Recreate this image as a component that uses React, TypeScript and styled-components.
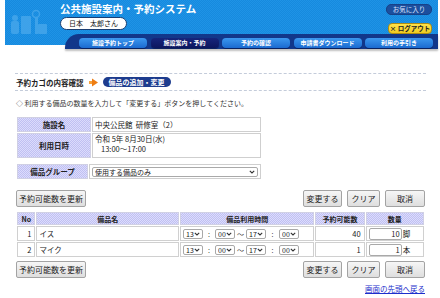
import React from "react";
import styled, { createGlobalStyle, css } from "styled-components";

const GlobalStyle = createGlobalStyle`
  html, body {
    margin: 0;
    padding: 0;
    background: #fff;
  }
  body {
    width: 440px;
    font-family: "Noto Sans CJK JP", "Noto Sans", sans-serif;
    font-size: 7.5px;
    color: #222;
  }
`

const lavender = css`
  background: repeating-conic-gradient(#c0c0f2 0 25%, #dcdcfc 0 50%) 0 0 / 2px 2px;
`

// Header

const Header = styled.header`
  margin: 0 2px 0 5px;
  background:
    linear-gradient(transparent 45px, #fff 45px),
    repeating-conic-gradient(#1f93e6 0 25%, #168ade 0 50%) 0 0 / 2px 2px;
`

const HeaderBlue = styled.div`
  display: flex;
  align-items: flex-start;
  height: 34px;
`

const Emblem = styled.div`
  width: 55px;
  height: 34px;
  display: flex;
  align-items: flex-end;
`

const TitleBlock = styled.div`
  display: flex;
  flex-direction: column;
  align-items: flex-start;
  gap: 2px;
  padding-top: 3px;
`

const Title = styled.h1`
  margin: 0;
  font-size: 10.5px;
  line-height: 12px;
  font-weight: bold;
  color: #fff;
`

const NamePill = styled.div`
  height: 11px;
  line-height: 11px;
  padding: 0 8px;
  background: #fff;
  border: 1px solid #1b3f73;
  border-radius: 7px;
  font-size: 7px;
  color: #111;
`

const HeaderLinks = styled.div`
  margin-left: auto;
  display: flex;
  flex-direction: column;
  align-items: flex-end;
  gap: 8px;
  padding: 4px 6px 0 0;
`

const FavButton = styled.a`
  width: 44px;
  height: 9px;
  line-height: 9px;
  text-align: center;
  background: #1c4f9e;
  border: 1px solid #174188;
  border-radius: 5px;
  color: #dbe6ff;
  font-size: 6.5px;
`

const LogoutButton = styled.a`
  width: 42px;
  height: 9px;
  line-height: 9px;
  text-align: center;
  background: linear-gradient(#ffe24a, #f0cc20);
  border: 1px solid #b08c10;
  border-radius: 4px;
  color: #222;
  font-size: 6.5px;
  font-weight: bold;
`

const TabBand = styled.nav`
  display: flex;
  gap: 3.5px;
  height: 15px;
  box-sizing: border-box;
  margin-left: 60px;
  padding: 4px 5px 0 14px;
  background: #12378a;
  border-radius: 14px 0 0 0;
  box-shadow: 0 2px 2px rgba(0, 0, 0, 0.25);
`

const Tab = styled.a<{ active?: boolean }>`
  width: 68px;
  height: 10px;
  line-height: 10px;
  text-align: center;
  border-radius: 4px;
  color: #fff;
  font-size: 6px;
  font-weight: bold;
  background: ${({ active }) =>
    active ? "linear-gradient(#16257c, #0b165e)" : "linear-gradient(#3b98ef, #1b6ad0)"};
  box-shadow: 0 1px 0 #0a2260;
`

// Content

const Content = styled.main`
  padding: 24px 14px 0 15px;
`

const Breadcrumb = styled.div`
  display: flex;
  align-items: center;
  gap: 5px;
  height: 16px;
  padding-left: 1px;
  border-top: 1px dashed #c4ccda;
  border-bottom: 1px dashed #c4ccda;
`

const CrumbText = styled.span`
  font-weight: bold;
  font-size: 7.5px;
`

const CrumbPill = styled.span`
  height: 10px;
  line-height: 10px;
  padding: 0 6px;
  border-radius: 6px;
  background: #1d3c8e;
  color: #fff;
  font-weight: bold;
  font-size: 7px;
`

const Lead = styled.p`
  margin: 7px 0 0 1px;
  line-height: 10px;
  font-size: 7px;
  color: #333;
`

const InfoTable = styled.table<{ gap?: number }>`
  margin: ${({ gap }) => gap ?? 8}px 0 0 1px;
  width: 246px;
  border-collapse: separate;
  border-spacing: 1px;
  line-height: 10px;
`

const LabelCell = styled.th`
  ${lavender};
  width: 72px;
  padding: 0;
  font-weight: bold;
  text-align: center;
  border: 1px solid #d0d0e4;
`

const ValueCell = styled.td<{ tall?: boolean }>`
  height: ${({ tall }) => (tall ? 23 : 13)}px;
  padding: 0 2px;
  border: 1px solid #cfcfcf;
  vertical-align: ${({ tall }) => (tall ? "top" : "middle")};
`

const Indent = styled.div`
  padding-left: 6px;
`

const SelectBox = styled.span<{ w: number }>`
  display: inline-flex;
  align-items: center;
  box-sizing: border-box;
  width: ${({ w }) => w}px;
  height: 10px;
  border: 1px solid #a9a9a9;
  border-radius: 2px;
  background: #fff;
  vertical-align: middle;

  select {
    flex: 1;
    min-width: 0;
    appearance: none;
    border: none;
    background: transparent;
    padding: 0 0 0 2px;
    margin: 0;
    font: inherit;
    font-size: 7px;
    line-height: 8px;
    color: #222;
    outline: none;
  }
  svg {
    flex: none;
    margin-right: 2px;
  }
`

const ButtonBar = styled.div<{ gap: number }>`
  display: flex;
  align-items: center;
  margin: ${({ gap }) => gap}px 0 0 1px;
`

const ButtonGroup = styled.div`
  margin-left: auto;
  display: flex;
  gap: 5px;
  padding-right: 1px;
`

const Button = styled.button<{ w: number }>`
  width: ${({ w }) => w}px;
  height: 17px;
  padding: 0;
  font-family: inherit;
  font-size: 8px;
  color: #222;
  background: linear-gradient(#f6f6f6, #dedede);
  border: 1px solid #a3a3a3;
  border-radius: 2px;
`

const MainTable = styled.table`
  margin: 4px 0 0 1px;
  width: 409px;
  border-collapse: separate;
  border-spacing: 1px;
  line-height: 10px;
`

const HeadCell = styled.th<{ w: number }>`
  ${lavender};
  width: ${({ w }) => w}px;
  height: 11px;
  padding: 0;
  font-size: 7px;
  font-weight: bold;
  text-align: center;
  border: 1px solid #d0d0e4;
`

const Cell = styled.td<{ align?: string }>`
  height: 13px;
  padding: 0 3px 0 2px;
  border: 1px solid #d0d0d0;
  text-align: ${({ align }) => align ?? "left"};
  white-space: nowrap;
`

const TimeRow = styled.div`
  display: flex;
  align-items: center;
`

const Sep = styled.span<{ w: number }>`
  width: ${({ w }) => w}px;
  text-align: center;
  font-size: 7px;
  color: #333;
`

const QtyWrap = styled.div`
  display: flex;
  align-items: center;
`

const QtyInput = styled.input`
  box-sizing: border-box;
  width: 33px;
  height: 12px;
  padding: 0 1px 0 0;
  border: 1px solid #a9a9a9;
  border-radius: 2px;
  font: inherit;
  font-size: 7.5px;
  text-align: right;
  color: #222;
`

const Unit = styled.span`
  margin-left: 1px;
`

const TopLink = styled.a`
  display: block;
  margin: 6px 1px 0 auto;
  width: max-content;
  line-height: 10px;
  color: #1d2fcc;
  text-decoration: underline;
  font-size: 7.5px;
`

// Icons

function Chevron() {
  return (
    <svg width="6" height="4" viewBox="0 0 6 4">
      <polyline points="0.8,0.8 3,3 5.2,0.8" fill="none" stroke="#333" strokeWidth="1.1" />
    </svg>
  )
}

function CrumbArrow() {
  return (
    <svg width="9" height="9" viewBox="0 0 9 9">
      <rect x="0" y="3" width="3" height="3" fill="#f7a23a" />
      <polygon points="3,0.5 9,4.5 3,8.5" fill="#ee7d12" />
    </svg>
  )
}

function EmblemArt() {
  return (
    <svg width="44" height="34" viewBox="0 0 44 34">
      <g fill="#4aa9ec" opacity="0.75">
        <circle cx="10" cy="18" r="3" />
        <rect x="6" y="21" width="8" height="13" rx="2" />
        <rect x="16" y="16" width="10" height="18" rx="1" />
        <circle cx="31" cy="14" r="3.5" fill="none" stroke="#4aa9ec" strokeWidth="1.5" />
        <rect x="30" y="17" width="3" height="17" />
        <rect x="33" y="24" width="9" height="10" rx="1" />
      </g>
    </svg>
  )
}

// Data

interface Equipment {
  no: number
  name: string
  available: number
  qty: number
  unit: string
}

const equipment: Equipment[] = [
  { no: 1, name: "イス", available: 40, qty: 10, unit: "脚" },
  { no: 2, name: "マイク", available: 1, qty: 1, unit: "本" },
]

const tabs = ["施設予約トップ", "施設案内・予約", "予約の確認", "申請書ダウンロード", "利用の手引き"]

function Select({ value, w }: { value: string; w: number }) {
  return (
    <SelectBox w={w}>
      <select defaultValue={value}>
        <option>{value}</option>
      </select>
      <Chevron />
    </SelectBox>
  )
}

function Actions({ gap }: { gap: number }) {
  return (
    <ButtonBar gap={gap}>
      <Button w={70}>予約可能数を更新</Button>
      <ButtonGroup>
        <Button w={39}>変更する</Button>
        <Button w={33}>クリア</Button>
        <Button w={40}>取消</Button>
      </ButtonGroup>
    </ButtonBar>
  )
}

export default function App() {
  return (
    <>
      <GlobalStyle />
      <Header>
        <HeaderBlue>
          <Emblem>
            <EmblemArt />
          </Emblem>
          <TitleBlock>
            <Title>公共施設案内・予約システム</Title>
            <NamePill>日本　太郎さん</NamePill>
          </TitleBlock>
          <HeaderLinks>
            <FavButton>お気に入り</FavButton>
            <LogoutButton>× ログアウト</LogoutButton>
          </HeaderLinks>
        </HeaderBlue>
        <TabBand>
          {tabs.map((t, i) => (
            <Tab key={t} active={i === 1}>{t}</Tab>
          ))}
        </TabBand>
      </Header>

      <Content>
        <Breadcrumb>
          <CrumbText>予約カゴの内容確認</CrumbText>
          <CrumbArrow />
          <CrumbPill>備品の追加・変更</CrumbPill>
        </Breadcrumb>

        <Lead>◇ 利用する備品の数量を入力して「変更する」ボタンを押してください。</Lead>

        <InfoTable>
          <tbody>
            <tr>
              <LabelCell>施設名</LabelCell>
              <ValueCell>中央公民館&nbsp;&nbsp;研修室（2）</ValueCell>
            </tr>
            <tr>
              <LabelCell>利用日時</LabelCell>
              <ValueCell tall>
                <div>令和 5年 8月30日(水)</div>
                <Indent>13:00〜17:00</Indent>
              </ValueCell>
            </tr>
          </tbody>
        </InfoTable>

        <InfoTable gap={4}>
          <tbody>
            <tr>
              <LabelCell>備品グループ</LabelCell>
              <ValueCell>
                <Select value="使用する備品のみ" w={166} />
              </ValueCell>
            </tr>
          </tbody>
        </InfoTable>

        <Actions gap={10} />

        <MainTable>
          <thead>
            <tr>
              <HeadCell w={17}>No</HeadCell>
              <HeadCell w={149}>備品名</HeadCell>
              <HeadCell w={133}>備品利用時間</HeadCell>
              <HeadCell w={50}>予約可能数</HeadCell>
              <HeadCell w={57}>数量</HeadCell>
            </tr>
          </thead>
          <tbody>
            {equipment.map((e) => (
              <tr key={e.no}>
                <Cell align="right">{e.no}</Cell>
                <Cell>{e.name}</Cell>
                <Cell>
                  <TimeRow>
                    <Select value="13" w={20} />
                    <Sep w={12}>:</Sep>
                    <Select value="00" w={20} />
                    <Sep w={11}>〜</Sep>
                    <Select value="17" w={20} />
                    <Sep w={13}>:</Sep>
                    <Select value="00" w={20} />
                  </TimeRow>
                </Cell>
                <Cell align="right">{e.available}</Cell>
                <Cell>
                  <QtyWrap>
                    <QtyInput defaultValue={e.qty} />
                    <Unit>{e.unit}</Unit>
                  </QtyWrap>
                </Cell>
              </tr>
            ))}
          </tbody>
        </MainTable>

        <Actions gap={3} />

        <TopLink href="#">画面の先頭へ戻る</TopLink>
      </Content>
    </>
  )
}
